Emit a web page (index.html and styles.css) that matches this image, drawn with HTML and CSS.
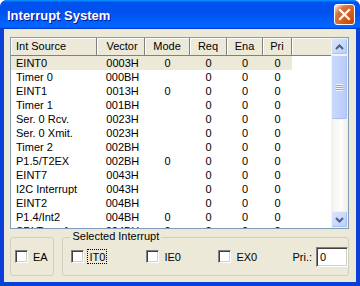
FILE: index.html
```html
<!DOCTYPE html>
<html lang="en">

<head>
  <meta charset="UTF-8" />
  <meta name="viewport" content="width=device-width, initial-scale=1.0" />
  <title>Interrupt System</title>
  <link rel="stylesheet" href="styles.css">
</head>

<body>
  <div class="window">
    <!-- Title bar -->
    <div class="titlebar">
      <span class="title">Interrupt System</span>
      <span class="close-btn">
        <svg width="19" height="19" viewBox="0 0 19 19">
          <path d="M5 5 L14 14 M14 5 L5 14" stroke="#fff" stroke-width="2.2" stroke-linecap="square" fill="none" />
        </svg>
      </span>
    </div>

    <div class="client">
      <!-- Interrupt list -->
      <div class="list">
        <div class="list-main">
          <div class="list-head">
            <div class="col c-src">Int Source</div>
            <div class="col c-vec">Vector</div>
            <div class="col c-mode">Mode</div>
            <div class="col c-req">Req</div>
            <div class="col c-ena">Ena</div>
            <div class="col c-pri">Pri</div>
            <div class="col c-fill"></div>
          </div>
          <div class="list-body" id="list-body"></div>
        </div>
        <div class="scrollbar">
          <div class="sb-btn">
            <svg width="9" height="6" viewBox="0 0 9 6">
              <path d="M1 5 L4.5 1.5 L8 5" stroke="#4d6185" stroke-width="2" fill="none" />
            </svg>
          </div>
          <div class="sb-thumb">
            <span class="grip"></span>
          </div>
          <div class="sb-track"></div>
          <div class="sb-btn">
            <svg width="9" height="6" viewBox="0 0 9 6">
              <path d="M1 1 L4.5 4.5 L8 1" stroke="#4d6185" stroke-width="2" fill="none" />
            </svg>
          </div>
        </div>
      </div>

      <!-- Bottom controls -->
      <div class="bottom">
        <div class="group group-ea">
          <div class="check"><span class="box"></span><span>EA</span></div>
        </div>
        <div class="group group-sel">
          <span class="group-title">Selected Interrupt</span>
          <div class="check"><span class="box"></span><span class="focus">IT0</span></div>
          <div class="check"><span class="box"></span><span>IE0</span></div>
          <div class="check"><span class="box"></span><span>EX0</span></div>
          <div class="pri">
            <span>Pri.:</span>
            <span class="pri-input">0</span>
          </div>
        </div>
      </div>
    </div>
  </div>

  <script>
    const interrupts = [
      { src: "EINT0", vec: "0003H", mode: "0" },
      { src: "Timer 0", vec: "000BH", mode: "" },
      { src: "EINT1", vec: "0013H", mode: "0" },
      { src: "Timer 1", vec: "001BH", mode: "" },
      { src: "Ser. 0 Rcv.", vec: "0023H", mode: "" },
      { src: "Ser. 0 Xmit.", vec: "0023H", mode: "" },
      { src: "Timer 2", vec: "002BH", mode: "" },
      { src: "P1.5/T2EX", vec: "002BH", mode: "0" },
      { src: "EINT7", vec: "0043H", mode: "" },
      { src: "I2C Interrupt", vec: "0043H", mode: "" },
      { src: "EINT2", vec: "004BH", mode: "" },
      { src: "P1.4/Int2", vec: "004BH", mode: "0" },
      { src: "SPI Transfer", vec: "004BH", mode: "0" },
    ];

    const listBody = document.getElementById("list-body");
    interrupts.forEach((item, i) => {
      const row = document.createElement("div");
      row.className = i == 0 ? "row selected" : "row";
      row.innerHTML = `
        <div class="col c-src">${item.src}</div>
        <div class="col c-vec">${item.vec}</div>
        <div class="col c-mode">${item.mode}</div>
        <div class="col c-req">0</div>
        <div class="col c-ena">0</div>
        <div class="col c-pri">0</div>
      `;
      listBody.appendChild(row);
    });
  </script>
</body>

</html>
```

FILE: styles.css
```css
/* Page */
body {
  margin: 0;
  background: #fff;
  font-family: "Liberation Sans", Arial, sans-serif;
  font-size: 11px;
  color: #000;
}

/* Window frame */
.window {
  width: 360px;
  height: 286px;
  background: #0a3fd8;
  border-radius: 7px 7px 0 0;
  display: flex;
  flex-direction: column;
  overflow: hidden;
}

.titlebar {
  height: 29px;
  flex-shrink: 0;
  display: flex;
  align-items: center;
  justify-content: space-between;
  padding: 2px 5px 0 7px;
  box-sizing: border-box;
  background: linear-gradient(180deg, #0997ff, #0053ee 8%, #0050ee 40%, #06f 88%, #06f 93%, #005bff 95%, #003dd7 96%, #003dd7);
}

.title {
  color: #fff;
  font-size: 13px;
  font-weight: bold;
  text-shadow: 1px 1px #0f1089;
}

.close-btn {
  width: 21px;
  height: 21px;
  box-sizing: border-box;
  border: 1px solid #fff;
  border-radius: 3px;
  margin-top: -2px;
  display: flex;
  align-items: center;
  justify-content: center;
  background: radial-gradient(circle at 90% 90%, #cc4600 0, #dc6527 55%, #cd7546 70%, #ffccb2 90%, #fff 100%);
}

/* Client area */
.client {
  flex: 1;
  margin: 0 4px 4px 4px;
  background: #ece9d8;
  padding: 8px 7px 0 6px;
}

/* List view */
.list {
  height: 192px;
  box-sizing: border-box;
  border: 1px solid #7f9db9;
  background: #fff;
  display: flex;
  overflow: hidden;
}

.list-main {
  flex: 1;
  overflow: hidden;
}

.list-head {
  display: flex;
  height: 18px;
}

.list-head .col {
  height: 18px;
  line-height: 17px;
  box-sizing: border-box;
  background: #ece9d8;
  border-right: 1px solid #808080;
  border-bottom: 1px solid #808080;
  box-shadow: inset 1px 1px #fff;
}

.list-head .c-fill {
  flex: 1;
  border-right: none;
}

.row {
  display: flex;
  height: 14px;
  line-height: 14px;
}

.row.selected {
  width: 281px;
  background: #ece9d8;
}

.col {
  flex-shrink: 0;
  white-space: nowrap;
  overflow: hidden;
  text-align: center;
}

.c-src { width: 86px; text-align: left; padding-left: 5px; box-sizing: border-box; }
.c-vec { width: 48px; padding-left: 3px; box-sizing: border-box; }
.c-mode { width: 45px; }
.c-req { width: 37px; }
.c-ena { width: 36px; }
.c-pri { width: 29px; }

/* Scroll bar */
.scrollbar {
  width: 17px;
  display: flex;
  flex-direction: column;
  background: linear-gradient(90deg, #f3f1ec, #fefefb 60%, #eeede5);
}

.sb-btn {
  height: 17px;
  box-sizing: border-box;
  border: 1px solid #eef3fd;
  border-radius: 2px;
  background: linear-gradient(135deg, #dbe6fd, #b9cdf9);
  box-shadow: inset -1px -1px #aac0ef;
  display: flex;
  align-items: center;
  justify-content: center;
}

.sb-thumb {
  height: 65px;
  box-sizing: border-box;
  border: 1px solid #eef3fd;
  border-radius: 2px;
  background: linear-gradient(90deg, #c9d8fc, #c1d3fb 50%, #b7c9f5);
  box-shadow: inset -1px -1px #aac0ef;
  display: flex;
  align-items: center;
  justify-content: center;
}

.grip {
  width: 7px;
  height: 7px;
  background: repeating-linear-gradient(180deg, #eef3fe 0, #eef3fe 1px, #8ca6e0 1px, #8ca6e0 2px);
}

.sb-track {
  flex: 1;
}

/* Bottom controls */
.bottom {
  display: flex;
  gap: 8px;
  margin-top: 8px;
}

.group {
  height: 39px;
  box-sizing: border-box;
  border: 1px solid #d0d0bf;
  border-radius: 3px;
  display: flex;
  align-items: center;
  position: relative;
}

.group-ea {
  width: 46px;
  padding-left: 4px;
}

.group-sel {
  flex: 1;
  padding-left: 8px;
  display: grid;
  grid-template-columns: 75px 72px 74px auto;
  align-items: center;
}

.group-title {
  position: absolute;
  top: -8px;
  left: 7px;
  padding: 0 2px;
  background: #ece9d8;
}

.check {
  display: flex;
  align-items: center;
  gap: 4px;
}

.box {
  width: 13px;
  height: 13px;
  box-sizing: border-box;
  background: #fff;
  border: 1px solid;
  border-color: #808080 #fff #fff #808080;
  box-shadow: inset 1px 1px #404040, inset -1px -1px #d4d0c8;
  margin-right: 1px;
}

.focus {
  border: 1px dotted #000;
  padding: 1px 1px 0 1px;
  margin-left: -2px;
}

.pri {
  display: flex;
  align-items: center;
  gap: 4px;
}

.pri-input {
  width: 32px;
  height: 20px;
  line-height: 18px;
  box-sizing: border-box;
  padding-left: 3px;
  background: #fff;
  border: 1px solid;
  border-color: #808080 #fff #fff #808080;
  box-shadow: inset 1px 1px #404040, inset -1px -1px #d4d0c8;
}
```
